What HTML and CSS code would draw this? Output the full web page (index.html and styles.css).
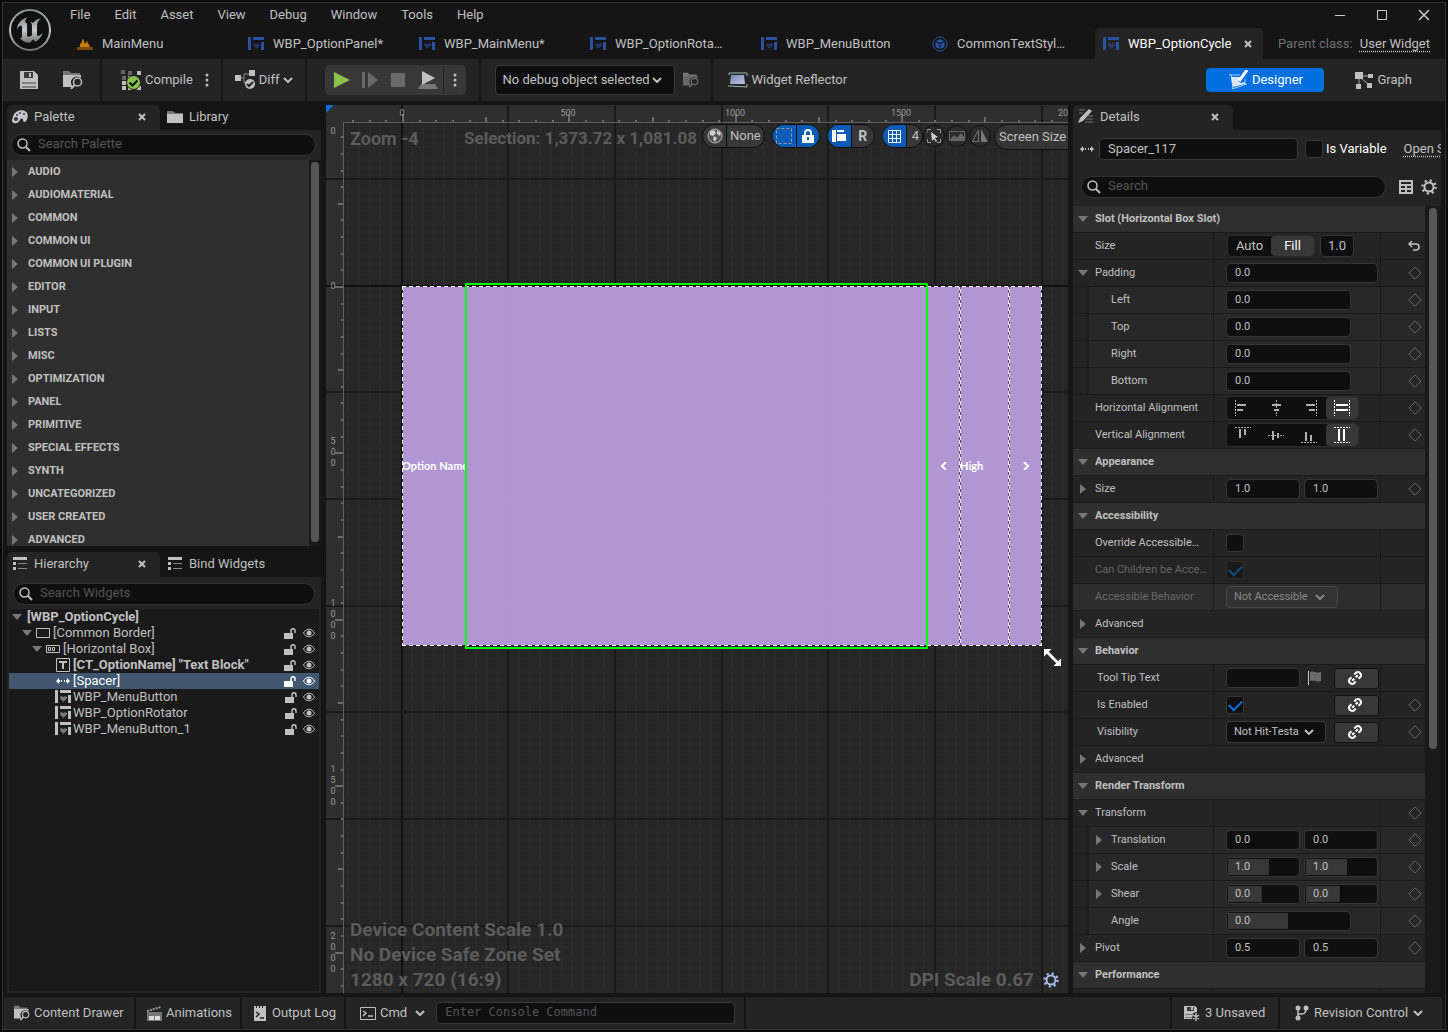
FILE: index.html
```html
<!DOCTYPE html>
<html lang="en">
<head>
<meta charset="utf-8">
<title>WBP_OptionCycle</title>
<link rel="stylesheet" href="styles.css">
</head>
<body>
<svg class="sprite" aria-hidden="true">
  <defs>
    <linearGradient id="metal" x1="0" y1="0" x2="0" y2="1"><stop offset="0" stop-color="#8b8f8f"/><stop offset=".5" stop-color="#c4c8c8"/><stop offset="1" stop-color="#6f7676"/></linearGradient>
    <linearGradient id="glass" x1="0" y1="0" x2="1" y2="1"><stop offset="0" stop-color="#6f83b8"/><stop offset="1" stop-color="#c3cbe2"/></linearGradient>
  </defs>
  <symbol id="widget" viewBox="0 0 16 16"><path fill="currentColor" d="M0 1h3v13H0zM5 1h11v3H5zM13 6h3v8h-3z"/><path fill="currentColor" opacity=".55" d="M8.500 13 5 9.500V8l1.500-1 2 1 2-1L12 8v1.500z"/></symbol>
  <symbol id="level" viewBox="0 0 16 14"><path fill="#7a4a05" d="M0 10h16v3H0z"/><path fill="#c77c0a" d="M3 10V6l1 1 2-6 2 6 2-3 3 6z"/></symbol>
  <symbol id="cube" viewBox="0 0 16 16"><circle cx="8" cy="8" r="7" fill="none" stroke="currentColor" stroke-width="1"/><path fill="currentColor" d="M8 3l4 2-4 2-4-2zM3.500 6 7.500 8v5l-4-2zM12.500 6l-4 2v5l4-2z"/></symbol>
  <symbol id="save" viewBox="0 0 18 18"><path fill="currentColor" d="M0 0h14l4 4v14H0z"/><path fill="#3a3a3a" d="M4 1h9v6H4z"/><path fill="currentColor" d="M9 2h2v4H9z"/><path fill="#808080" d="M2 11h14v2H2zM2 15h14v2H2z"/></symbol>
  <symbol id="browse" viewBox="0 0 20 18"><path fill="#777" d="M0 0h6l2 2h9v2H0z"/><path fill="currentColor" d="M0 4h18v3a6 6 0 0 0-8 9H0z"/><circle cx="14.500" cy="11" r="4" fill="none" stroke="currentColor" stroke-width="1.500"/><path stroke="currentColor" stroke-width="2" d="M11.500 14 8 18"/></symbol>
  <symbol id="folder" viewBox="0 0 16 12"><path fill="#777" d="M0 0h6l2 2h8v1H0z"/><path fill="currentColor" d="M0 3h16v9H0z"/></symbol>
  <symbol id="compile" viewBox="0 0 20 20"><path fill="#666" d="M0 0h4v4H0zM7 1h4v4H7zM1 6h4v4H1z"/><path fill="#c0c0c0" d="M16 1h4v4h-4zM7 6h4v4H7zM1 11h4v4H1zM1 16h4v4H1zM7 16h4v4H7zM16 16h4v4h-4z"/><circle cx="12.500" cy="12.500" r="7" fill="#8bc24a" stroke="#1b1b1b"/><path fill="none" stroke="#111" stroke-width="2" d="m8.500 12.500 3 3 5-5"/></symbol>
  <symbol id="diff" viewBox="0 0 21 20"><path fill="none" stroke="#888" d="M5 8h4V4h5M9 8v5h2"/><path fill="currentColor" d="M0 5h6v6H0zM14 0h6v6h-6z"/><circle cx="15" cy="14" r="5" fill="currentColor"/><path fill="none" stroke="#222" stroke-width="2" d="m12 14 2 2 4-4"/></symbol>
  <symbol id="chevron" viewBox="0 0 10 6"><path fill="none" stroke="currentColor" stroke-width="2" d="m1 1 4 4 4-4"/></symbol>
  <symbol id="dots" viewBox="0 0 4 16"><circle cx="2" cy="3" r="1.500" fill="currentColor"/><circle cx="2" cy="8" r="1.500" fill="currentColor"/><circle cx="2" cy="13" r="1.500" fill="currentColor"/></symbol>
  <symbol id="play" viewBox="0 0 16 16"><path fill="#8bc24a" d="M0 0v16l16-8z"/></symbol>
  <symbol id="step" viewBox="0 0 16 16"><path fill="currentColor" d="M0 0h3v16H0zM6 0v16l10-8z"/></symbol>
  <symbol id="stop" viewBox="0 0 16 16"><path fill="currentColor" d="M1 1h14v14H1z"/></symbol>
  <symbol id="eject" viewBox="0 0 20 18"><path fill="#777" d="M3 13h14l3 5H0z"/><path fill="#c0c0c0" d="M4 0v14l13-7z"/></symbol>
  <symbol id="reflector" viewBox="0 0 20 16"><path fill="none" stroke="#9fb5a5" d="M1 1h18v3M1 1v2M0 14h2l17 1v-3"/><path fill="url(#glass)" d="M3 3h13l1 9H2z"/></symbol>
  <symbol id="designer" viewBox="0 0 20 20"><path fill="none" stroke="#a8ccf0" stroke-width="1" d="M1 5h11M4 19l15-5M3 4l2 15M17 9v6"/><path fill="#dbe8f5" d="M3 7h9l-2 4 3 2 4-1v2L5 17z"/><path stroke="#fff" stroke-width="3" d="m11 11 8-11"/></symbol>
  <symbol id="graph" viewBox="0 0 18 17"><path fill="none" stroke="#aaa" d="M4 4v10M5 4h10M5 5l9 8"/><path fill="currentColor" d="M0 0h8v7H0zM13 2h5v4h-5zM12 11h5v5h-5zM1 12h5v5H1z"/></symbol>
  <symbol id="palette" viewBox="0 0 16 14"><path fill="#c8c8c8" d="M1 7C2 2 8-1 13 1c4 2 3 7 1 10-1 2-3 1-3-1S9 8 8 10s-3 4-6 3S0 9 1 7z"/><g fill="#26394f"><circle cx="5" cy="5" r="1"/><circle cx="8" cy="3" r="1"/><circle cx="12" cy="4" r="1"/><circle cx="4" cy="9" r="2"/></g></symbol>
  <symbol id="list" viewBox="0 0 14 13"><path fill="currentColor" d="M0 0h14v3H0zM0 5h3v3H0zM0 10h3v3H0z"/><path fill="#888" d="M5 6h9v1H5zM5 11h9v1H5z"/></symbol>
  <symbol id="search" viewBox="0 0 14 14"><circle cx="5.500" cy="5.500" r="4.500" fill="none" stroke="currentColor" stroke-width="1.500"/><path stroke="currentColor" stroke-width="2" d="m9 9 4 4"/></symbol>
  <symbol id="x" viewBox="0 0 8 8"><path stroke="currentColor" stroke-width="2" d="m1 1 6 6M7 1 1 7"/></symbol>
  <symbol id="right" viewBox="0 0 6 10"><path fill="#777" d="M0 0v10l6-5z"/></symbol>
  <symbol id="down" viewBox="0 0 10 6"><path fill="#777" d="M0 0h10L5 6z"/></symbol>
  <symbol id="border" viewBox="0 0 14 10"><path fill="none" stroke="currentColor" d="M.5.5h13v9H.5z"/></symbol>
  <symbol id="hbox" viewBox="0 0 14 8"><path fill="none" stroke="currentColor" d="M.5.5h13v7H.5zM2.500 2.500h2v3h-2zM6.500 2.500h2v3h-2z"/></symbol>
  <symbol id="text" viewBox="0 0 14 14"><path fill="none" stroke="currentColor" d="M.5.5h13v13H.5z"/><path fill="currentColor" d="M3 3h8v2H8v6H6V5H3z"/></symbol>
  <symbol id="spacer" viewBox="0 0 14 6"><path fill="currentColor" d="M0 3l3-3v2h1v2H3v2zM14 3l-3-3v2h-1v2h1v2zM5 2h1v2H5zM8 2h1v2H8z"/></symbol>
  <symbol id="unlock" viewBox="0 0 12 11"><path fill="currentColor" d="M0 5h9v6H0z"/><path fill="none" stroke="currentColor" stroke-width="1.500" d="M7 5V3c0-3 4-3 4 0v2"/></symbol>
  <symbol id="eye" viewBox="0 0 12 10"><path fill="none" stroke="currentColor" d="M.5 5C3 0 9 0 11.500 5 9 10 3 10 .5 5z"/><circle cx="6" cy="5" r="2.500" fill="currentColor"/></symbol>
  <symbol id="pencil" viewBox="0 0 16 15"><path stroke="#777" d="M1 1h6M1 4h4M10 7h5M8 10h7M7 13h8"/><path fill="currentColor" d="M0 14l2-5 9-9 3 2-9 10z"/></symbol>
  <symbol id="table" viewBox="0 0 14 14"><path fill="none" stroke="currentColor" stroke-width="2" d="M1 1h12v12H1zM1 5h12M1 9h12M7 5v8"/></symbol>
  <symbol id="gear" viewBox="0 0 16 16"><circle cx="8" cy="8" r="4.500" fill="none" stroke="currentColor" stroke-width="2"/><circle cx="8" cy="8" r="6.500" fill="none" stroke="currentColor" stroke-width="2.500" stroke-dasharray="2 3.100"/></symbol>
  <symbol id="diamond" viewBox="0 0 14 14"><path fill="none" stroke="#696969" d="M7 .8 13.200 7 7 13.200.8 7z"/></symbol>
  <symbol id="reset" viewBox="0 0 12 10"><path fill="none" stroke="currentColor" stroke-width="1.500" d="M4 0 1 3l3 3M1 3h7c4 0 4 6 0 6H5"/></symbol>
  <symbol id="link" viewBox="0 0 16 16"><path transform="rotate(-45 8 8)" fill="none" stroke="#fff" stroke-width="2" d="M6 5H3a3 3 0 0 0-2 3 3 3 0 0 0 2 3h3M10 5h3a3 3 0 0 1 2 3 3 3 0 0 1-2 3h-3M4 8h3M9 8h3"/></symbol>
  <symbol id="flag" viewBox="0 0 13 14"><path fill="#ccc" d="M0 0h1v14H0z"/><path fill="#6c6c6c" d="M2 1c4-2 5 2 11 0v9c-5 2-6-2-11 0z"/></symbol>
  <symbol id="h-left" viewBox="0 0 16 16"><path stroke="currentColor" stroke-dasharray="2 1" d="M.5 0v16"/><path fill="currentColor" d="M2 4h9v2H2zM2 9h6v2H2z"/></symbol>
  <symbol id="h-mid" viewBox="0 0 16 16"><path stroke="currentColor" stroke-dasharray="2 1" d="M8.500 0v16"/><path fill="currentColor" d="M4 4h9v2H4zM6 9h5v2H6z"/></symbol>
  <symbol id="h-right" viewBox="0 0 16 16"><path stroke="currentColor" stroke-dasharray="2 1" d="M15.500 0v16"/><path fill="currentColor" d="M5 4h9v2H5zM8 9h6v2H8z"/></symbol>
  <symbol id="h-fill" viewBox="0 0 16 16"><path stroke="currentColor" stroke-dasharray="2 1" d="M.5 0v16M15.500 0v16"/><path fill="currentColor" d="M2 4h12v2H2zM2 9h12v2H2z"/></symbol>
  <symbol id="screen" viewBox="0 0 16 13"><path fill="none" stroke="currentColor" d="M.5.5h15v12H.5z"/><path fill="none" stroke="currentColor" stroke-width="1.500" d="m3 4 3 2-3 3M8 9h5"/></symbol>
  <symbol id="clap" viewBox="0 0 16 15"><path stroke="#999" stroke-width="2" stroke-dasharray="2 1" d="m1 5 14-4"/><path fill="#777" d="M1 6h15v9H1z"/><path fill="#ddd" d="M3 10h5v4H3zM9 10h5v4H9z"/></symbol>
  <symbol id="log" viewBox="0 0 12 16"><path fill="currentColor" d="M0 1h2v2h1V1h2v2h1V1h2v2h1V1h3v15H0z"/><path fill="none" stroke="#222" stroke-width="1.500" d="m2 7 3 2-3 3M6 13h4"/></symbol>
  <symbol id="branch" viewBox="0 0 14 16"><path fill="none" stroke="currentColor" stroke-width="1.500" d="M3 3v10M3 9h4c3 0 4-2 4-6"/><g fill="currentColor"><circle cx="3" cy="3" r="2.500"/><circle cx="11" cy="3" r="2.500"/><circle cx="3" cy="13" r="2.500"/></g></symbol>
</svg>

<div class="window">
  <header class="titlebar">
    <svg class="logo" viewBox="0 0 44 44"><circle cx="22" cy="22" r="20" fill="#101010" stroke="url(#metal)" stroke-width="2"/><path fill="url(#metal)" transform="translate(1 1) scale(1.750)" d="M19.130 13.729c-.206.997-1.126 3.557-4.060 4.942l-1.179-1.325-1.988 2a7.338 7.338 0 0 1-5.804-2.978 2.859 2.859 0 0 0 .65.123c.326.006.678-.114.678-.66v-5.394a.89.89 0 0 0-1.116-.89c-.92.212-1.656 2.509-1.656 2.509a7.304 7.304 0 0 1 2.528-5.597 7.408 7.408 0 0 1 3.730-1.721c-1.006.573-1.570 1.507-1.570 2.290 0 1.262.76 1.109.984.923v7.280a1.157 1.157 0 0 0 .148.256 1.075 1.075 0 0 0 .88.445c.76 0 1.747-.868 1.747-.868V9.172c0-.6-.452-1.324-.905-1.572 0 0 .838-.149 1.484.346a5.537 5.537 0 0 1 .387-.425c1.508-1.480 2.929-1.902 4.112-2.112 0 0-2.151 1.690-2.151 3.960 0 1.687.043 5.801.043 5.801.799.771 1.986-.342 3.059-1.441z"/></svg>
    <div class="title-rows">
      <div class="menu-row">
        <nav class="menus">
          <button>File</button><button>Edit</button><button>Asset</button><button>View</button><button>Debug</button><button>Window</button><button>Tools</button><button>Help</button>
        </nav>
        <div class="controls">
          <button aria-label="Minimize"><svg width="12" height="12"><path stroke="#ccc" d="M1 6.500h10"/></svg></button>
          <button aria-label="Maximize"><svg width="12" height="12"><path fill="none" stroke="#ccc" d="M1.500 1.500h9v9h-9z"/></svg></button>
          <button aria-label="Close"><svg width="12" height="12"><path stroke="#ccc" stroke-width="1.500" d="m1 1 10 10M11 1 1 11"/></svg></button>
        </div>
      </div>
      <div class="tab-row">
        <div class="doc-tabs">
          <button class="doc-tab"><svg class="i16"><use href="#level"/></svg><span>MainMenu</span></button>
          <button class="doc-tab"><svg class="i16 blue"><use href="#widget"/></svg><span>WBP_OptionPanel*</span></button>
          <button class="doc-tab"><svg class="i16 blue"><use href="#widget"/></svg><span>WBP_MainMenu*</span></button>
          <button class="doc-tab"><svg class="i16 blue"><use href="#widget"/></svg><span>WBP_OptionRota…</span></button>
          <button class="doc-tab"><svg class="i16 blue"><use href="#widget"/></svg><span>WBP_MenuButton</span></button>
          <button class="doc-tab"><svg class="i16 blue"><use href="#cube"/></svg><span>CommonTextStyl…</span></button>
          <button class="doc-tab active"><svg class="i16 blue"><use href="#widget"/></svg><span>WBP_OptionCycle</span><svg class="i8"><use href="#x"/></svg></button>
        </div>
        <div class="parent">Parent class: <a href="#user-widget">User Widget</a></div>
      </div>
    </div>
  </header>

  <div class="toolbar">
    <div class="group g-file">
      <button aria-label="Save"><svg width="18" height="18"><use href="#save"/></svg></button>
      <button aria-label="Browse"><svg width="20" height="18"><use href="#browse"/></svg></button>
    </div>
    <div class="group g-compile">
      <button><svg width="20" height="20"><use href="#compile"/></svg>Compile</button>
      <button aria-label="Compile options"><svg width="4" height="16"><use href="#dots"/></svg></button>
    </div>
    <div class="group g-diff"><button><svg width="21" height="20"><use href="#diff"/></svg>Diff<svg class="chev"><use href="#chevron"/></svg></button></div>
    <div class="group g-play">
      <div class="play">
        <button aria-label="Play"><svg class="i16"><use href="#play"/></svg></button>
        <button aria-label="Step" class="dim"><svg class="i16"><use href="#step"/></svg></button>
        <button aria-label="Stop" class="dim"><svg class="i16"><use href="#stop"/></svg></button>
        <button aria-label="Eject"><svg width="20" height="18"><use href="#eject"/></svg></button>
        <button aria-label="Play options" class="more"><svg width="4" height="16"><use href="#dots"/></svg></button>
      </div>
    </div>
    <div class="group g-debug">
      <span class="combo debug"><select aria-label="Debug object"><option>No debug object selected</option></select><svg class="chev"><use href="#chevron"/></svg></span>
      <button class="dim" aria-label="Find"><svg width="16" height="16"><use href="#browse"/></svg></button>
    </div>
    <div class="group g-reflect"><button><svg width="20" height="16"><use href="#reflector"/></svg>Widget Reflector</button></div>
    <div class="modes">
      <button class="designer"><svg width="20" height="20"><use href="#designer"/></svg>Designer</button>
      <button class="graph"><svg width="18" height="17"><use href="#graph"/></svg>Graph</button>
    </div>
  </div>

  <main class="workspace">
    <div class="left">
      <section class="panel">
        <div class="tabs">
          <button class="tab active"><svg width="16" height="14"><use href="#palette"/></svg><span>Palette</span><svg class="i8"><use href="#x"/></svg></button>
          <button class="tab"><svg width="16" height="12"><use href="#folder"/></svg><span>Library</span></button>
        </div>
        <div class="body">
          <label class="search"><svg class="i14"><use href="#search"/></svg><input aria-label="Search Palette" placeholder="Search Palette"></label>
          <div class="scroll palette">
            <ul>
              <li><svg class="tri"><use href="#right"/></svg>AUDIO</li><li><svg class="tri"><use href="#right"/></svg>AUDIOMATERIAL</li><li><svg class="tri"><use href="#right"/></svg>COMMON</li><li><svg class="tri"><use href="#right"/></svg>COMMON UI</li><li><svg class="tri"><use href="#right"/></svg>COMMON UI PLUGIN</li><li><svg class="tri"><use href="#right"/></svg>EDITOR</li><li><svg class="tri"><use href="#right"/></svg>INPUT</li><li><svg class="tri"><use href="#right"/></svg>LISTS</li><li><svg class="tri"><use href="#right"/></svg>MISC</li><li><svg class="tri"><use href="#right"/></svg>OPTIMIZATION</li><li><svg class="tri"><use href="#right"/></svg>PANEL</li><li><svg class="tri"><use href="#right"/></svg>PRIMITIVE</li><li><svg class="tri"><use href="#right"/></svg>SPECIAL EFFECTS</li><li><svg class="tri"><use href="#right"/></svg>SYNTH</li><li><svg class="tri"><use href="#right"/></svg>UNCATEGORIZED</li><li><svg class="tri"><use href="#right"/></svg>USER CREATED</li><li><svg class="tri"><use href="#right"/></svg>ADVANCED</li>
            </ul>
            <div class="track"><div class="thumb"></div></div>
          </div>
        </div>
      </section>
      <section class="panel">
        <div class="tabs listed">
          <button class="tab active"><svg width="14" height="13"><use href="#list"/></svg><span>Hierarchy</span><svg class="i8"><use href="#x"/></svg></button>
          <button class="tab"><svg width="14" height="13"><use href="#list"/></svg><span>Bind Widgets</span></button>
        </div>
        <div class="body hierarchy">
          <label class="search"><svg class="i14"><use href="#search"/></svg><input aria-label="Search Widgets" placeholder="Search Widgets"></label>
          <ul class="tree">
            <li class="l0 strong"><svg class="tri-d"><use href="#down"/></svg><span>[WBP_OptionCycle]</span></li>
            <li class="l1"><svg class="tri-d"><use href="#down"/></svg><svg width="14" height="10"><use href="#border"/></svg><span>[Common Border]</span><svg class="lock"><use href="#unlock"/></svg><svg class="eye"><use href="#eye"/></svg></li>
            <li class="l2"><svg class="tri-d"><use href="#down"/></svg><svg width="14" height="8"><use href="#hbox"/></svg><span>[Horizontal Box]</span><svg class="lock"><use href="#unlock"/></svg><svg class="eye"><use href="#eye"/></svg></li>
            <li class="l3 strong"><svg width="14" height="14"><use href="#text"/></svg><span>[CT_OptionName] "Text Block"</span><svg class="lock"><use href="#unlock"/></svg><svg class="eye"><use href="#eye"/></svg></li>
            <li class="l3 selected"><svg width="14" height="6"><use href="#spacer"/></svg><span>[Spacer]</span><svg class="lock"><use href="#unlock"/></svg><svg class="eye"><use href="#eye"/></svg></li>
            <li class="l3 user"><svg class="i16"><use href="#widget"/></svg><span>WBP_MenuButton</span><svg class="lock"><use href="#unlock"/></svg><svg class="eye"><use href="#eye"/></svg></li>
            <li class="l3 user"><svg class="i16"><use href="#widget"/></svg><span>WBP_OptionRotator</span><svg class="lock"><use href="#unlock"/></svg><svg class="eye"><use href="#eye"/></svg></li>
            <li class="l3 user"><svg class="i16"><use href="#widget"/></svg><span>WBP_MenuButton_1</span><svg class="lock"><use href="#unlock"/></svg><svg class="eye"><use href="#eye"/></svg></li>
          </ul>
        </div>
      </section>
    </div>

    <section class="viewport" aria-label="Designer viewport">
      <svg class="grid" id="grid" width="100%" height="100%"></svg>
      <div class="surface">
        <div class="w name"><span>Option Name</span></div>
        <div class="w space"></div>
        <div class="w prev"><svg width="6" height="8"><path fill="none" stroke="#fff" stroke-width="2" d="M5 0 1 4l4 4"/></svg></div>
        <div class="w rotator">High</div>
        <div class="w next"><svg width="6" height="8"><path fill="none" stroke="#fff" stroke-width="2" d="m1 0 4 4-4 4"/></svg></div>
      </div>
      <div class="selection-box"></div>
      <svg class="cursor" viewBox="0 0 18 18"><path fill="#fff" d="M0 0h8L0 8zM18 18h-8l8-8z"/><path stroke="#fff" stroke-width="3" d="m3 3 12 12"/></svg>
      <div class="hud-top">
        <span class="hud zoom">Zoom -4</span>
        <span class="hud sel">Selection: 1,373.72 x 1,081.08</span>
        <div class="pills">
          <div class="pill"><button aria-label="Localization"><svg class="i16"><circle cx="8" cy="8" r="7" fill="#555" stroke="#bbb"/><path fill="#ccc" d="M3 3l4-1 2 3-3 3-3-1zM7 8l3 2-2 4-2-3zM10 2l4 3-1 3-3-2z"/></svg></button><button>None</button></div>
          <div class="pill"><button class="on" aria-label="Show outlines"><svg class="i16"><path fill="none" stroke="#9a9a9a" stroke-dasharray="3 2" d="M.5.5h15v15H.5z"/></svg></button><button class="on" aria-label="Respect locks"><svg width="12" height="14"><path fill="#fff" d="M0 6h12v8H0z"/><path fill="none" stroke="#fff" stroke-width="2" d="M3 7V4c0-4 6-4 6 0v3"/><path fill="#0b5db8" d="M5 8h2v3H5z"/></svg></button></div>
          <div class="pill"><button class="on" aria-label="Flow direction"><svg class="i16"><path fill="#fff" d="M1 2h4v12H1zM6 2h7v2H6zM6 6h9v7H6z"/></svg></button><button class="r">R</button></div>
          <div class="pill snap"><button class="on" aria-label="Grid snap"><svg width="13" height="13"><path fill="none" stroke="#fff" stroke-width="1" d="M.5.5h12v12H.5zM4.500 0v13M8.500 0v13M0 4.500h13M0 8.500h13"/></svg></button><button>4</button></div>
          <button class="round" aria-label="Zoom to fit"><svg width="14" height="14"><path fill="none" stroke="#999" d="M0 4V.5h4M10 .5h3.500V4M13.500 10v3.500H10M4 13.500H.5V10"/><path fill="#ccc" d="M4 3l7 5-3 1 2 3-1 1-2-3-2 2z"/></svg></button>
          <button class="round dim" aria-label="Background image"><svg class="i16"><path fill="none" stroke="#666" d="M.5 3.500h15v9H.5z"/><path fill="#666" d="m1 12 4-5 3 3 4-5 3 4v3z"/></svg></button>
          <button class="round dim" aria-label="Flip"><svg class="i16"><path fill="none" stroke="#777" d="M6.500 2v11.500h-6z"/><path fill="#777" d="M9 1v13h7z"/></svg></button>
          <button class="screen">Screen Size</button>
        </div>
      </div>
      <div class="hud-bottom">
        <div class="hud">Device Content Scale 1.0<br>No Device Safe Zone Set<br>1280 x 720 (16:9)</div>
        <div class="hud dpi">DPI Scale 0.67<button aria-label="DPI settings"><svg class="i16"><use href="#gear"/></svg></button></div>
      </div>
    </section>

    <section class="panel details">
      <div class="tabs"><button class="tab active"><svg width="16" height="15"><use href="#pencil"/></svg><span>Details</span><svg class="i8"><use href="#x"/></svg></button></div>
      <div class="body">
        <div class="object">
          <svg width="14" height="6"><use href="#spacer"/></svg>
          <input class="objname" aria-label="Name" value="Spacer_117">
          <label class="isvar"><input type="checkbox">Is Variable</label>
          <a href="#open">Open Spacer</a>
        </div>
        <div class="find">
          <label class="search"><svg class="i14"><use href="#search"/></svg><input aria-label="Search details" placeholder="Search"></label>
          <button aria-label="Property matrix"><svg class="i14"><use href="#table"/></svg></button>
          <button aria-label="Settings"><svg class="i16"><use href="#gear"/></svg></button>
        </div>
        <div class="scroll">
          <div class="props">
            <h3><svg class="tri-d"><use href="#down"/></svg>Slot (Horizontal Box Slot)</h3>
            <div class="row"><span class="key">Size</span><div class="val"><div class="seg"><button>Auto</button><button class="on">Fill</button></div><input class="num tiny" aria-label="Fill size" value="1.0"></div><div class="end"><svg class="reset"><use href="#reset"/></svg></div></div>
            <div class="row"><label class="key" for="pad"><svg class="tri-d"><use href="#down"/></svg>Padding</label><div class="val"><input id="pad" class="num wide" value="0.0"></div><div class="end"><svg class="i14"><use href="#diamond"/></svg></div></div>
            <div class="row sub"><label class="key" for="pl">Left</label><div class="val"><input id="pl" class="num mid" value="0.0"></div><div class="end"><svg class="i14"><use href="#diamond"/></svg></div></div>
            <div class="row sub"><label class="key" for="pt">Top</label><div class="val"><input id="pt" class="num mid" value="0.0"></div><div class="end"><svg class="i14"><use href="#diamond"/></svg></div></div>
            <div class="row sub"><label class="key" for="pr">Right</label><div class="val"><input id="pr" class="num mid" value="0.0"></div><div class="end"><svg class="i14"><use href="#diamond"/></svg></div></div>
            <div class="row sub"><label class="key" for="pb">Bottom</label><div class="val"><input id="pb" class="num mid" value="0.0"></div><div class="end"><svg class="i14"><use href="#diamond"/></svg></div></div>
            <div class="row"><span class="key">Horizontal Alignment</span><div class="val"><div class="align"><button aria-label="Left"><svg class="i16"><use href="#h-left"/></svg></button><button aria-label="Center"><svg class="i16"><use href="#h-mid"/></svg></button><button aria-label="Right"><svg class="i16"><use href="#h-right"/></svg></button><button class="on" aria-label="Fill"><svg class="i16"><use href="#h-fill"/></svg></button></div></div><div class="end"><svg class="i14"><use href="#diamond"/></svg></div></div>
            <div class="row"><span class="key">Vertical Alignment</span><div class="val"><div class="align vert"><button aria-label="Top"><svg class="i16"><use href="#h-left"/></svg></button><button aria-label="Center"><svg class="i16"><use href="#h-mid"/></svg></button><button aria-label="Bottom"><svg class="i16"><use href="#h-right"/></svg></button><button class="on" aria-label="Fill"><svg class="i16"><use href="#h-fill"/></svg></button></div></div><div class="end"><svg class="i14"><use href="#diamond"/></svg></div></div>
            <h3><svg class="tri-d"><use href="#down"/></svg>Appearance</h3>
            <div class="row"><span class="key"><svg class="tri"><use href="#right"/></svg>Size</span><div class="val"><input class="num" aria-label="Size X" value="1.0"><input class="num" aria-label="Size Y" value="1.0"></div><div class="end"><svg class="i14"><use href="#diamond"/></svg></div></div>
            <h3><svg class="tri-d"><use href="#down"/></svg>Accessibility</h3>
            <div class="row"><label class="key" for="ov">Override Accessible…</label><div class="val"><input id="ov" type="checkbox"></div><div class="end"></div></div>
            <div class="row off"><label class="key" for="cc">Can Children be Acce…</label><div class="val"><input id="cc" type="checkbox" checked disabled></div><div class="end"></div></div>
            <div class="row off hover"><label class="key" for="ab">Accessible Behavior</label><div class="val"><span class="combo acc"><select id="ab" disabled><option>Not Accessible</option></select><svg class="chev"><use href="#chevron"/></svg></span></div><div class="end"></div></div>
            <div class="row full"><span class="key"><svg class="tri"><use href="#right"/></svg>Advanced</span></div>
            <h3><svg class="tri-d"><use href="#down"/></svg>Behavior</h3>
            <div class="row bound"><label class="key" for="tt">Tool Tip Text</label><div class="val"><input id="tt" class="num"><svg class="flag"><use href="#flag"/></svg><button class="bind" aria-label="Bind tool tip"><svg class="i16"><use href="#link"/></svg></button></div><div class="end"></div></div>
            <div class="row bound"><label class="key" for="en">Is Enabled</label><div class="val"><input id="en" type="checkbox" checked><button class="bind" aria-label="Bind enabled"><svg class="i16"><use href="#link"/></svg></button></div><div class="end"><svg class="i14"><use href="#diamond"/></svg></div></div>
            <div class="row bound"><label class="key" for="vi">Visibility</label><div class="val"><span class="combo vis"><select id="vi"><option>Not Hit-Testable (Self Only)</option></select><svg class="chev"><use href="#chevron"/></svg></span><button class="bind" aria-label="Bind visibility"><svg class="i16"><use href="#link"/></svg></button></div><div class="end"><svg class="i14"><use href="#diamond"/></svg></div></div>
            <div class="row full"><span class="key"><svg class="tri"><use href="#right"/></svg>Advanced</span></div>
            <h3><svg class="tri-d"><use href="#down"/></svg>Render Transform</h3>
            <div class="row"><span class="key"><svg class="tri-d"><use href="#down"/></svg>Transform</span><div class="val"></div><div class="end"><svg class="i14"><use href="#diamond"/></svg></div></div>
            <div class="row sub"><span class="key"><svg class="tri"><use href="#right"/></svg>Translation</span><div class="val"><input class="num" aria-label="Translation X" value="0.0"><input class="num" aria-label="Translation Y" value="0.0"></div><div class="end"><svg class="i14"><use href="#diamond"/></svg></div></div>
            <div class="row sub"><span class="key"><svg class="tri"><use href="#right"/></svg>Scale</span><div class="val"><input class="num fill" style="--fill:57%" aria-label="Scale X" value="1.0"><input class="num fill" style="--fill:57%" aria-label="Scale Y" value="1.0"></div><div class="end"><svg class="i14"><use href="#diamond"/></svg></div></div>
            <div class="row sub"><span class="key"><svg class="tri"><use href="#right"/></svg>Shear</span><div class="val"><input class="num fill" style="--fill:47%" aria-label="Shear X" value="0.0"><input class="num fill" style="--fill:47%" aria-label="Shear Y" value="0.0"></div><div class="end"><svg class="i14"><use href="#diamond"/></svg></div></div>
            <div class="row sub"><label class="key" for="an">Angle</label><div class="val"><input id="an" class="num mid fill" style="--fill:49%" value="0.0"></div><div class="end"><svg class="i14"><use href="#diamond"/></svg></div></div>
            <div class="row"><span class="key"><svg class="tri"><use href="#right"/></svg>Pivot</span><div class="val"><input class="num" aria-label="Pivot X" value="0.5"><input class="num" aria-label="Pivot Y" value="0.5"></div><div class="end"><svg class="i14"><use href="#diamond"/></svg></div></div>
            <h3><svg class="tri-d"><use href="#down"/></svg>Performance</h3>
            <div class="row"><span class="key"></span><div class="val"></div><div class="end"></div></div>
          </div>
          <div class="track"><div class="thumb"></div></div>
        </div>
      </div>
    </section>
  </main>

  <footer class="status">
    <button class="drawer"><svg width="16" height="16"><use href="#browse"/></svg>Content Drawer</button>
    <button class="anim"><svg width="16" height="15"><use href="#clap"/></svg>Animations</button>
    <button class="outlog"><svg width="12" height="16"><use href="#log"/></svg>Output Log</button>
    <div class="console"><button><svg width="16" height="13"><use href="#screen"/></svg>Cmd<svg class="chev"><use href="#chevron"/></svg></button><input aria-label="Console command" placeholder="Enter Console Command"></div>
    <div class="blank"></div>
    <button class="unsaved"><svg width="16" height="15" viewBox="0 0 16 15"><path fill="#c0c0c0" d="M0 0h11l2 2v4l-4 1-1 6H0z"/><path fill="#3a3a3a" d="M3 1h7v4H3z"/><path fill="#c0c0c0" d="M7 1h2v3H7z"/><path fill="#777" d="M1 8h7v1H1zM1 11h7v1H1z"/><path stroke="#c0c0c0" stroke-width="1.500" d="M12 7v8M9 9l6 4M15 9l-6 4"/></svg>3 Unsaved</button>
    <button class="revision"><svg width="14" height="16"><use href="#branch"/></svg>Revision Control<svg class="chev"><use href="#chevron"/></svg></button>
  </footer>
</div>
<script src="grid.js"></script>
</body>
</html>
```
FILE: styles.css
```css
* { box-sizing: border-box; }
html, body { height: 100%; }
body { margin: 0; background: #0b0b0b; color: #c0c0c0; font: 13px/16px Roboto, "Liberation Sans", sans-serif; overflow: hidden; }
button { margin: 0; padding: 0; border: 0; background: none; color: inherit; font: inherit; display: flex; align-items: center; white-space: nowrap; }
input, select { margin: 0; font: inherit; color: inherit; min-width: 0; }
ul { list-style: none; margin: 0; padding: 0; }
svg { display: block; flex: none; }
.sprite { position: absolute; width: 0; height: 0; }
.i8 { width: 8px; height: 8px; }
.i14 { width: 14px; height: 14px; }
.i16 { width: 16px; height: 16px; }
.blue { color: #2a52a0; }
.dim { color: #6a6a6a; }
.chev { width: 10px; height: 6px; }
.tri { width: 6px; height: 10px; }
.tri-d { width: 10px; height: 6px; }

.window { height: calc(100vh - 4px); margin: 2px; border: 1px solid #333; background: #151515; display: flex; flex-direction: column; }

/* Title bar */
.titlebar { display: flex; height: 56px; flex: none; }
.logo { width: 44px; height: 44px; margin: 5px 15px 0 5px; }
.title-rows { flex: 1; min-width: 0; display: flex; flex-direction: column; }
.menu-row { display: flex; justify-content: space-between; height: 25px; padding-bottom: 2px; align-items: center; }
.menus { display: flex; gap: 24px; padding-left: 3px; }
.controls { display: flex; gap: 30px; padding-right: 15px; }
.tab-row { display: flex; flex: 1; justify-content: space-between; }
.doc-tabs { display: flex; gap: 3px; padding-left: 2px; }
.doc-tab { width: 168px; padding-left: 8px; gap: 9px; border-radius: 5px 5px 0 0; }
.doc-tab .i8 { margin-left: 4px; }
.doc-tab.active { background: #242424; color: #fff; }
.doc-tab.active .i8 { color: #c0c0c0; }
.parent { color: #707070; line-height: 31px; padding-right: 15px; white-space: nowrap; }
.parent a { color: #c0c0c0; margin-left: 4px; }
a { color: inherit; text-decoration: underline dotted; text-underline-offset: 3px; }

/* Toolbar */
.toolbar { display: flex; height: 42px; flex: none; background: #242424; }
.group { display: flex; align-items: center; border-right: 2px solid #171717; }
.g-file { padding: 0 17px; gap: 25px; }
.g-compile { padding: 0 12px 0 19px; gap: 12px; }
.g-compile button, .g-reflect button { gap: 4px; }
.g-diff button { gap: 3px; }
.g-diff { padding: 0 12px; }
.g-play { padding: 0 13px 0 18px; }
.play { display: flex; height: 30px; background: #383838; border-radius: 5px; padding-left: 9px; }
.play button { width: 28px; }
.play .more { width: 23px; margin-left: -3px; border-left: 1px solid #242424; justify-content: center; }
.g-debug { padding: 0 12px 0 14px; gap: 8px; }
.combo { display: flex; align-items: center; background: #0f0f0f; border: 1px solid #383838; border-radius: 4px; }
.combo select { appearance: none; border: 0; background: none; padding: 0; flex: 1; outline: 0; text-overflow: clip; }
.debug { width: 180px; height: 30px; padding: 0 12px 0 7px; }
.debug .chev { margin-left: -10px; }
.g-reflect { border: 0; padding-left: 15px; }
.modes { margin-left: auto; display: flex; align-items: center; padding-right: 33px; }
.modes button { gap: 4px; height: 24px; }
.designer { background: #0070e0; color: #fff; border-radius: 4px; width: 118px; justify-content: center; margin-right: 31px; }

/* Panels */
.workspace { flex: 1; min-height: 0; display: grid; grid-template-columns: 314px minmax(0, 1fr) 368px; gap: 5px; padding: 4px 4px; }
.left { display: flex; flex-direction: column; gap: 6px; min-height: 0; }
.panel { flex: 1 1 0; min-height: 0; min-width: 0; display: flex; flex-direction: column; }
.tabs { display: flex; height: 25px; flex: none; }
.tab { width: 153px; padding: 0 14px 2px 5px; gap: 6px; border-radius: 5px 5px 0 0; }
.tab .i8 { margin-left: auto; }
.tab.active { background: #242424; }
.tab:not(.active) { padding-left: 7px; }
.listed .tab { gap: 7px; padding-left: 6px; }
.listed .tab:not(.active) { padding-left: 8px; }
.details .tab { width: 160px; }
.body { flex: 1; min-height: 0; background: #242424; display: flex; flex-direction: column; }
.search { display: flex; align-items: center; gap: 7px; height: 22px; margin: 4px 5px 4px 4px; padding: 0 5px; background: #0f0f0f; border: 1px solid #333; border-radius: 11px; }
.search input { flex: 1; border: 0; background: none; outline: 0; padding: 0 0 2px; }
::placeholder { color: #555; opacity: 1; }
.scroll { flex: 1; min-height: 0; display: flex; overflow: hidden; }
.track { background: #1a1a1a; flex: none; width: 12px; padding: 2px; }
.thumb { width: 8px; border-radius: 4px; background: #575757; height: 380px; }
.palette ul { flex: 1; background: #2f2f2f; }
.palette li { display: flex; align-items: center; gap: 10px; height: 23px; padding-left: 5px; font-size: 11px; font-weight: 700; }
.hierarchy .search { margin: 6px 6px 4px; }
.tree { flex: 1; margin: 0 2px 2px; background: #1a1a1a; }
.tree li { display: flex; align-items: center; height: 16px; padding-right: 4px; gap: 3px; }
.tree .l1 .tri-d, .tree .l2 .tri-d { margin-right: 1px; }
.tree span { flex: 1; white-space: nowrap; }
.strong { font-weight: 700; }
.l0 { padding-left: 3px; }
.tree .l0 { gap: 5px; }
.l1 { padding-left: 13px; }
.l2 { padding-left: 23px; }
.l3 { padding-left: 47px; }
.tree .user { padding-left: 46px; gap: 2px; }
.tree .selected { background: #40576f; color: #fff; }
.lock { width: 12px; height: 11px; }
.eye { width: 12px; height: 10px; margin-left: 4px; }

/* Designer viewport */
.viewport { position: relative; overflow: hidden; background: #262626; }
.grid text { font-size: 9px; fill: #9a9a9a; text-anchor: middle; }
.surface {
  --dash: #fff 0 4px, #2b2233 4px 7px;
  --dash-inner: #f2eafa 0 4px, #594a6b 4px 7px;
  position: absolute; left: 76px; top: 181px; width: 640px; height: 360px; display: flex;
  background: rgb(183 157 220 / 95%); color: #fff; font: 700 11px/12px Lato, sans-serif;
}
.surface::after {
  content: ""; position: absolute; inset: 0;
  background:
    repeating-linear-gradient(90deg, var(--dash)) top / 100% 1px no-repeat,
    repeating-linear-gradient(90deg, var(--dash)) bottom / 100% 1px no-repeat,
    repeating-linear-gradient(var(--dash)) left / 1px 100% no-repeat,
    repeating-linear-gradient(var(--dash)) right / 1px 100% no-repeat;
}
.w { display: flex; align-items: center; white-space: nowrap; background: repeating-linear-gradient(var(--dash-inner)) right / 1px 100% no-repeat; }
.rotator, .next { background: repeating-linear-gradient(#594a6b 0 3px, #f2eafa 3px 7px) left / 1px 100% no-repeat, repeating-linear-gradient(var(--dash-inner)) right / 1px 100% no-repeat; }
.name { width: 64px; overflow: hidden; }
.space { flex: 1; }
.prev, .next { width: 33px; justify-content: center; }
.rotator { width: 49px; }
.selection-box { position: absolute; left: 139px; top: 178px; width: 463px; height: 366px; border: 2px solid #0f0; border-radius: 1px; }
.cursor { position: absolute; left: 718px; top: 544px; width: 17px; height: 17px; }
.hud { font-size: 19px; line-height: 25px; font-weight: 700; color: #5c5c5c; white-space: nowrap; }
.hud-top { position: absolute; left: 24px; right: 0; top: 19px; display: flex; height: 26px; }
.hud-top .hud { font-size: 18px; line-height: 29px; }
.hud-top .sel { margin-left: auto; font-size: 17px; }
.pills { display: flex; align-items: center; height: 24px; margin-left: 5px; width: 366px; }
.pill { display: flex; height: 24px; border: 1px solid #0c0c0c; border-radius: 12px; overflow: hidden; background: #383838; margin-right: 7px; flex: none; }
.pill button { min-width: 23px; padding: 0 3px; justify-content: center; border-left: 1px solid #0c0c0c; }
.pill button:first-child { border: 0; }
.pill .on { background: #0b5db8; }
.pill .r { font-weight: 700; font-size: 14px; }
.snap { margin-right: 0; }
.pill.snap button { min-width: 0; padding: 0 3px 0 5px; }
.pill.snap .on { padding: 0 5px; }
.round { width: 22px; height: 22px; flex: none; margin-right: 1px; justify-content: center; border: 1px solid #111; border-radius: 50%; background: #2c2c2c; }
.screen { height: 26px; flex: none; margin: 2px 0 0 2px; padding: 0 20px 0 4px; background: #353535; border: 1px solid #111; border-radius: 13px; }
.hud-bottom { position: absolute; left: 24px; right: 9px; bottom: 1px; display: flex; justify-content: space-between; align-items: flex-end; }
.dpi { display: flex; align-items: center; gap: 9px; }
.dpi button { color: #a9bbec; }

/* Details */
.object { display: flex; align-items: center; height: 22px; margin: 8px 0 0 7px; overflow: hidden; white-space: nowrap; flex: none; }
.objname { width: 199px; height: 22px; margin: 0 7px 0 5px; padding: 0 8px 2px; background: #0f0f0f; border: 1px solid #383838; border-radius: 4px; flex: none; }
.isvar { display: flex; align-items: center; gap: 3px; color: #fff; margin-right: 17px; flex: none; }
input[type="checkbox"] { appearance: none; width: 18px; height: 18px; background: #0f0f0f; border: 1px solid #383838; border-radius: 3px; display: grid; place-items: center; flex: none; }
input[type="checkbox"]:checked::after { content: ""; width: 11px; height: 6px; margin-bottom: 3px; border: solid #0070e0; border-width: 0 0 2px 2px; transform: rotate(-45deg); }
.find { display: flex; align-items: center; height: 46px; padding: 15px 4px 8px 8px; gap: 8px; flex: none; }
.find .search { flex: 1; margin: 0 5px 0 0; }
.props { flex: 1; min-width: 0; font-size: 11px; }
.details .track { width: 16px; padding: 2px 4px; }
.details .thumb { height: 541px; }
.props h3 { margin: 0; height: 27px; display: flex; align-items: center; gap: 7px; padding-left: 5px; font-size: 11px; background: #2f2f2f; border-bottom: 1px solid #1a1a1a; }
.row { display: grid; grid-template-columns: 141px minmax(0, 1fr) 44px; height: 27px; border-bottom: 1px solid #1a1a1a; }
.key { display: flex; align-items: center; gap: 9px; padding-left: 22px; border-right: 1px solid #1a1a1a; white-space: nowrap; overflow: hidden; }
.key:has(.tri-d) { padding-left: 5px; gap: 7px; }
.key:has(.tri) { padding-left: 7px; }
.bound .key { padding-left: 24px; }
.full .key { border: 0; }
.sub { background: linear-gradient(90deg, #242424 12px, #1b1b1b 16px, #282828 16px); }
.sub .key { padding-left: 38px; }
.sub .key:has(.tri) { padding-left: 23px; }
.val { display: flex; align-items: center; padding: 0 1px 0 12px; gap: 4px; border-right: 1px solid #1a1a1a; }
.end { display: flex; align-items: center; padding-left: 27px; }
.reset { width: 12px; height: 10px; }
.off { color: #686868; }
.off input { opacity: .5; }
.hover { background: #2d2d2d; }
.num { width: 74px; height: 20px; padding: 0 8px 2px; background: #0f0f0f; border: 1px solid #363636; border-radius: 4px; flex: none; }
.wide { width: 152px; }
.mid { width: 125px; }
.tiny { width: 34px; height: 22px; font-size: 13px; padding: 0 7px 2px; margin-left: 1px; }
.fill { background: linear-gradient(#383838, #383838) 1px 1px / var(--fill) 16px no-repeat #0f0f0f; }
.seg, .align { display: flex; background: #0f0f0f; border: 1px solid #2c2c2c; border-radius: 4px; }
.seg { margin-left: 1px; height: 22px; font-size: 13px; }
.seg button { width: 43px; justify-content: center; }
.seg .on, .align .on { background: #383838; color: #fff; border-radius: 4px; }
.align { height: 24px; gap: 1px; }
.align button { width: 32px; justify-content: center; color: #b0b0b0; }
.align .on { color: #fff; }
.vert svg { transform: rotate(90deg) scaleY(-1); }
.acc { background: #333; border-color: #4a4a4a; width: 112px; height: 22px; padding: 0 12px 0 7px; color: #888; }
.acc select:disabled { opacity: 1; color: #888; }
.vis { width: 100px; height: 22px; padding: 0 11px 0 7px; }
.vis select { width: 65px; flex: none; overflow: hidden; }
.vis .chev { margin-left: 5px; }
.flag { width: 13px; height: 14px; margin-left: 4px; }
.bind { margin-left: auto; width: 45px; height: 21px; justify-content: center; background: #383838; border: 1px solid #111; border-radius: 3px; }
.bind svg { margin-right: 3px; }

/* Status bar */
.status { display: flex; height: 32px; flex: none; gap: 2px; padding: 0 3px 0 1px; }
.status > * { background: #242424; }
.status button { gap: 4px; }
.drawer { width: 130px; padding-left: 10px; }
.anim { width: 104px; padding-left: 10px; }
.outlog { width: 102px; padding-left: 12px; }
.status .outlog { gap: 6px; }
.console { width: 398px; display: flex; align-items: center; padding: 0 9px 0 14px; gap: 11px; }
.console .chev { margin-left: 4px; }
.console input { flex: 1; height: 22px; padding: 0 8px 2px; background: #0f0f0f; border: 1px solid #383838; border-radius: 4px; font: 12px/16px "DejaVu Sans Mono", monospace; }
.blank { flex: 1; }
.unsaved { width: 106px; padding-left: 12px; }
.status .unsaved, .status .revision { gap: 5px; }
.revision { width: 162px; padding-left: 15px; }
```
FILE: grid.js
```js
// Draws the designer grid and both rulers.
const svg = document.getElementById("grid");
const ORIGIN_X = 76, ORIGIN_Y = 181, RULER = 17;
const CELL = 320 / 3, UNIT = 1664 / 5000;

function draw() {
  const W = svg.clientWidth, H = svg.clientHeight;
  const out = [];
  const rect = (x, y, w, h, fill) => out.push(`<rect x="${x}" y="${y}" width="${w}" height="${h}" fill="${fill}"/>`);

  for (let i = -20; i * CELL / 10 < Math.max(W, H); i++) {
    const p = Math.floor(i * CELL / 10);
    rect(ORIGIN_X + p - 1, 0, 2, H, "#2a2a2a");
    rect(0, ORIGIN_Y + p - 1, W, 2, "#2a2a2a");
  }
  rect(0, 0, W, RULER, "#2f2f2f");
  rect(0, 0, RULER, H, "#2f2f2f");
  for (let i = -2; i * CELL < Math.max(W, H); i++) {
    const p = Math.floor(i * CELL);
    const fill = i === 0 ? "#101010" : "#1a1a1a";
    if (ORIGIN_X + p > RULER) rect(ORIGIN_X + p - 1, 0, 2, H, fill);
    if (ORIGIN_Y + p > RULER) rect(0, ORIGIN_Y + p - 1, W, 2, fill);
  }
  rect(RULER, RULER, W, 1, "#606060");
  rect(RULER, RULER, 1, H, "#606060");

  for (let u = -500; u * UNIT < Math.max(W, H); u += 50) {
    const len = u % 500 === 0 ? 8 : u % 250 === 0 ? 5 : 2;
    const x = ORIGIN_X + Math.round(u * UNIT), y = ORIGIN_Y + Math.round(u * UNIT);
    if (x > RULER && x < W + 8) rect(x, RULER - len, 2, len, "#6b6b6b");
    if (y > RULER && y < H) rect(RULER - len, y, len, 2, "#6b6b6b");
    if (u % 500 !== 0) continue;
    const label = String(Math.abs(u));
    if (x > RULER && x < W + 8) out.push(`<text x="${x}" y="11">${label}</text>`);
    [...label].forEach((digit, n) => {
      const cy = y + 3 + Math.round((n - (label.length - 1) / 2) * 11);
      if (cy > RULER + 6 && cy < H) out.push(`<text x="7" y="${cy}">${digit}</text>`);
    });
  }
  out.push('<path fill="#0070e0" d="M0 0h8L0 8z"/>');
  svg.innerHTML = out.join("");
}

draw();
addEventListener("resize", draw);
```
